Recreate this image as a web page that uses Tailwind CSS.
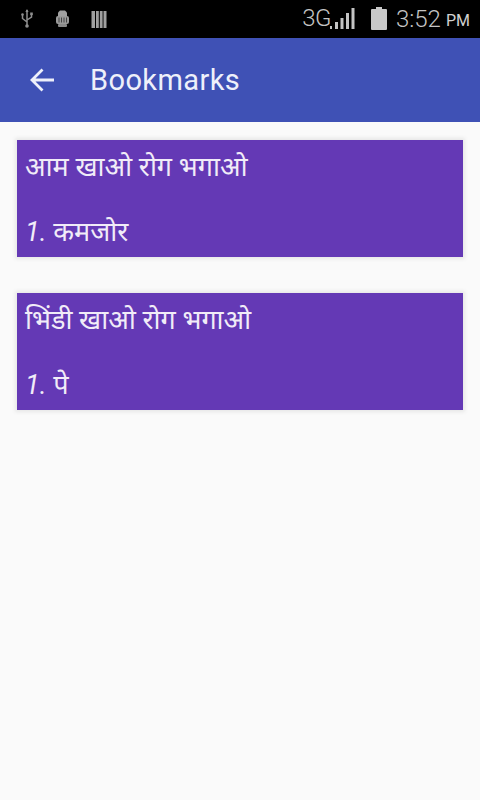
<!DOCTYPE html>
<html lang="hi">
<head>
    <meta charset="UTF-8">
    <meta name="viewport" content="width=device-width, initial-scale=1.0">
    <title>Bookmarks</title>
    <script src="https://cdn.jsdelivr.net/npm/@tailwindcss/browser@4"></script>
</head>
<body class="bg-[#fafafa] w-[480px] h-[800px] overflow-hidden font-['Roboto','Noto_Sans','Noto_Sans_Devanagari','Lohit_Devanagari',sans-serif]">
    <!-- Status bar -->
    <div class="h-[38px] bg-black flex items-center justify-between pl-[20px] pr-[10px]">
        <div class="flex items-center gap-[21px]">
            <svg class="w-[14px] h-[20px]" viewBox="0 0 14 20" fill="none" stroke="#8e8e8e" stroke-width="1.5">
                <path d="M7 1v16M7 13L2.500 9.500V6M7 11l4.500-3V5"/>
                <path d="M7 0l-1.600 3h3.200z" fill="#8e8e8e" stroke="none"/>
                <circle cx="7" cy="17" r="1.800" fill="#8e8e8e" stroke="none"/>
                <circle cx="2.500" cy="5.500" r="1.300" fill="#8e8e8e" stroke="none"/>
                <rect x="10.200" y="3.500" width="2.600" height="2.600" fill="#8e8e8e" stroke="none"/>
            </svg>
            <svg class="w-[15px] h-[20px]" viewBox="0 0 15 20">
                <path d="M3 7V3.500L5 1.500h5L12 3.500V7z" fill="#a0a0a0"/>
                <rect x="1" y="7" width="13" height="8" rx="2" fill="#9a9a9a"/>
                <path d="M4 8.500v5M6.500 8.500v5M9 8.500v5M11.500 8.500v5" stroke="#444" stroke-width="1"/>
                <rect x="3" y="15" width="9" height="3" rx="1" fill="#8a8a8a"/>
            </svg>
            <svg class="w-[16px] h-[19px]" viewBox="0 0 16 19" fill="#a0a0a0">
                <rect x="0.500" y="1" width="3.500" height="17"/>
                <rect x="5" y="1" width="2.800" height="17"/>
                <rect x="8.800" y="1" width="2.800" height="17"/>
                <rect x="12.500" y="1" width="3" height="17"/>
            </svg>
        </div>
        <div class="flex items-center text-[#c4c4c4]">
            <span class="text-[24px] leading-none tracking-[-0.5px] mb-[3px] font-light">3G</span>
            <svg class="w-[27px] h-[24px] ml-[-2px] mb-[2px]" viewBox="0 0 27 24" fill="#c4c4c4">
                <rect x="1" y="20" width="2" height="3"/>
                <rect x="6" y="16" width="3" height="7"/>
                <rect x="11.500" y="12" width="3" height="11"/>
                <rect x="17" y="7" width="3" height="16"/>
                <rect x="22.500" y="2" width="3" height="21"/>
            </svg>
            <svg class="w-[16px] h-[24px] ml-[15px] mb-[3px]" viewBox="0 0 16 24" fill="#c8c8c8">
                <path d="M5 1h6v2h4a1 1 0 0 1 1 1v19a1 1 0 0 1-1 1H1a1 1 0 0 1-1-1V4a1 1 0 0 1 1-1h4z"/>
            </svg>
            <span class="text-[24px] leading-none ml-[9px] mb-[1px] font-light">3:52</span>
            <span class="text-[16px] leading-none ml-[5px] mt-[4px] text-[#d0d0d0]">PM</span>
        </div>
    </div>

    <!-- Toolbar -->
    <div class="h-[84px] bg-[#3f51b5] flex items-center pl-[30px]">
        <svg class="w-[24px] h-[24px]" viewBox="0 0 24 24" fill="none" stroke="#eef0fa" stroke-width="2.800">
            <path d="M24 12H2M12.500 1.500L2 12l10.500 10.500"/>
        </svg>
        <h1 class="text-[#eef0fa] text-[29px] leading-none ml-[36px] tracking-[0.4px] mt-[1px]">Bookmarks</h1>
    </div>

    <!-- Bookmark cards -->
    <main class="pt-[18px] px-[17px] flex flex-col gap-[36px]">
        <div class="h-[117px] bg-[#6439b5] text-[#f1ecf8] pl-[8px] shadow-[0_0_4px_2px_rgba(0,0,0,0.08)]">
            <p class="text-[27px] leading-[54px]">आम खाओ रोग भगाओ</p>
            <p class="text-[27px] leading-[38px] mt-[19px]"><i>1.</i> कमजोर</p>
        </div>
        <div class="h-[117px] bg-[#6439b5] text-[#f1ecf8] pl-[8px] shadow-[0_0_4px_2px_rgba(0,0,0,0.08)]">
            <p class="text-[27px] leading-[54px]">भिंडी खाओ रोग भगाओ</p>
            <p class="text-[27px] leading-[38px] mt-[19px]"><i>1.</i> पे</p>
        </div>
    </main>
</body>
</html>
